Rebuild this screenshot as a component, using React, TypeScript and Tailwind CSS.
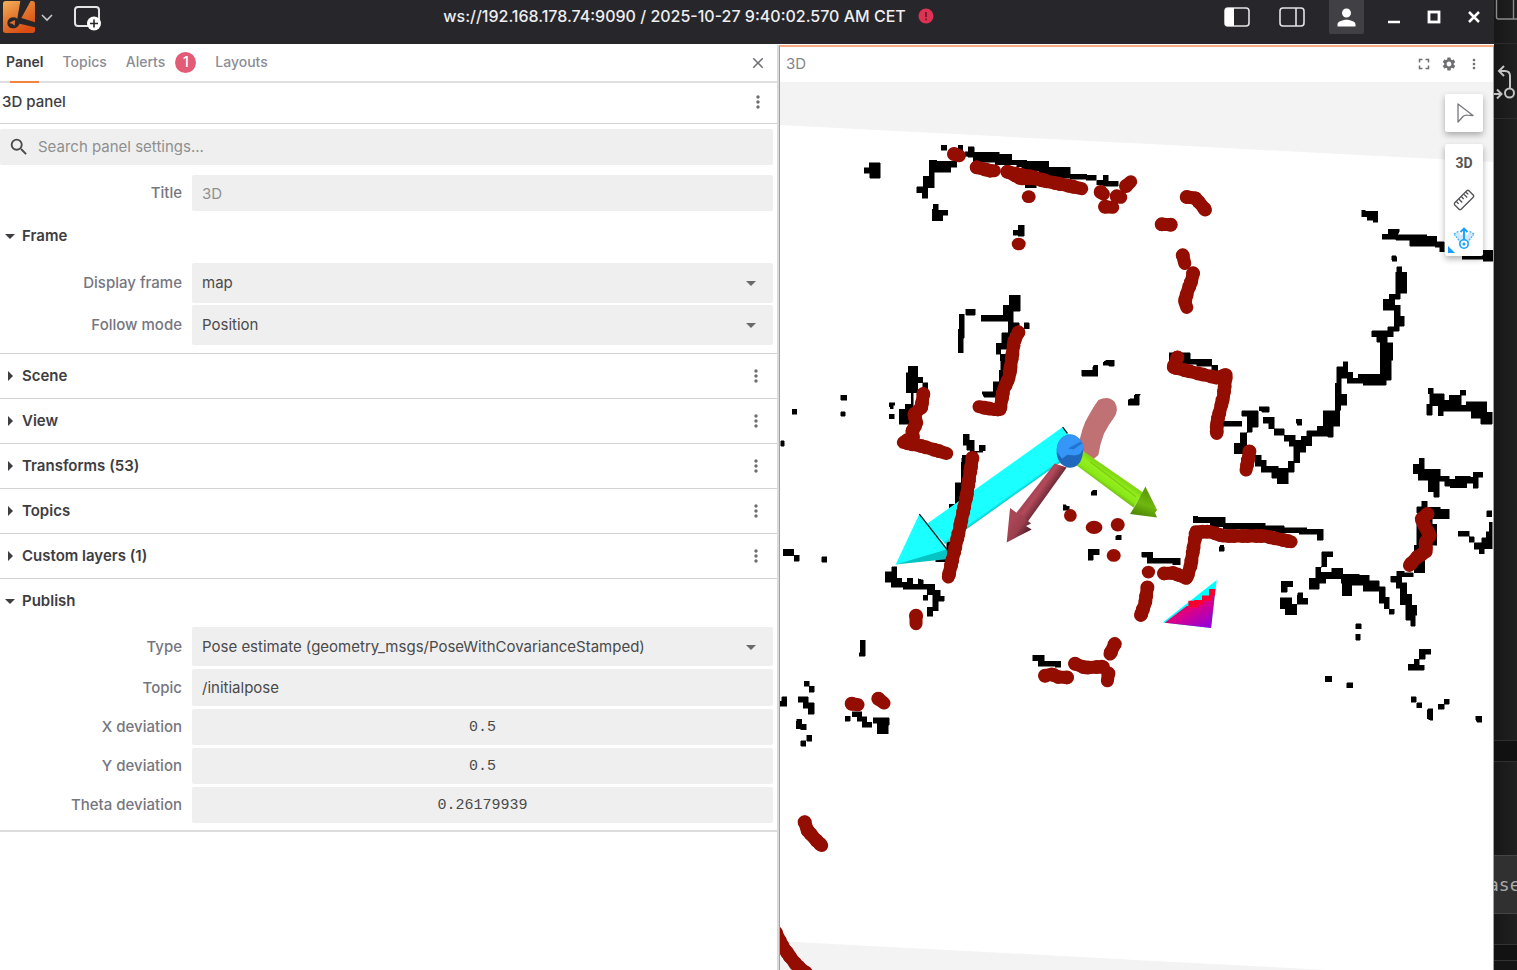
import { ReactNode } from "react";
import {
  MdArrowDropDown,
  MdArrowRight,
  MdClose,
  MdFullscreen,
  MdMoreVert,
  MdPerson,
  MdSearch,
  MdSettings,
} from "react-icons/md";

type Tile = { x: number; y: number; walls: string; scans: string; dots?: number[][] };

/* Occupancy grid walls and laser hits, in third-of-a-pixel units per tile. */
const tiles: Tile[] = [
  {
    x: 780,
    y: 120,
    walls:
      "M484 75h16v15h-16z M534 76h14v20h-14z M564 80h18v18h-18z M555 95H580V97H657V103H695V120H740V124H806V142H871V163H920V166H949V181H918V178H870V174H806V166H776V152H725V140H710V134H645V127H580V112H563V108H555Z M950 181H969V165H984V183H1014V198H968V194H950Z M448 121H470V124H530V142H512V157H463V203H443V235H426V218H410V200H430V169H448Z M268 128H301V174H269V160H253V143H268Z M459 252H474V270H503V286H488V302H456V268H459Z M715 316H733V348H715V346H699V331H715Z M736 190h33v13h-33z M688 525H721V574H700V608H717V640H690V670H680V688H662V702H648V670H665V638H684V604H603V586H669V556H688Z M733 608h15v18h-15z M557 567h29v18h-29z M538 582H552V654H549V698H534V628H538Z M661 702H690V790H670V832H612L606 818V815H640V785H658V750H662Z M700 740h10v14h-10z M384 739H413V772H428V788H413V818H400V912H358V868H375V852H394V818H379V758H384Z M428 788h15v18h-15z M36 867h14v15h-14z M182 826h18v14h-18z M182 875h14v14h-14z M328 848h16v8h-4v10h-10v-6h-2z M328 883h15v13h-15z M905 750H938V740L942 736H953V768H905Z M970 727L978 720H1003V739H986V735H970Z M1063 826L1067 822H1080V826H1077V855H1045V840L1050 836H1063Z",
    scans:
      "M522 102L538 107 M590 142L630 152L643 152 M682 155L725 176L755 174L800 184L850 194L905 206 M682 155L725 165L755 170L800 182 M962 216L970 222 M975 260L998 262 M1010 229L1022 232 M1038 198L1052 185 M715 637L702 665L696 710L687 772L670 810L660 868L640 868L597 860 M430 822L424 862L402 883L410 908L396 935L400 950L370 967L425 978L500 1000",
    dots: [[746, 230, 21, 19], [716, 372, 21, 19]],
  },
  {
    x: 1100,
    y: 150,
    walls:
      "M785 181H796V184H833V217H819V211H802V200H785Z M846 252H864V238H897V246L892 254H980V259H1010V275H1033V305H1019V291H1005V288H929V270H887V267H846Z M1086 310H1147V301H1180V333H1150V328H1086Z M875 317h13v5h2v12h-14z M890 350H905V367H920V430H901V448H884V466H900V499H913V529H897V543H879V560H862V578H878V630H873V690H858V706H789V700H741V685H724V732H740V765H722V780H719V828H700V862H683V858H635V887H617V907H599V938H582V967H565V1001H531V985H515V966H483V949H466V915H484V931H499V949H535V955H564V934H581V889H568V873H553V856H585V870H603V858H620V842H651V828H669V782H705V699H710V650H729V635H743V667H758V685H774V672H841V577H830V560H815V542H863V530H882V480H849V447H867V432H887V367H890Z M489 801H523V836H553V856H523V836H506V820H489Z M425 782H474V831H456V847H440V894H430V911H402V880H421V848H441V798H425Z M477 770H508V787H485V782H477Z M588 807h17v18h-13v-6h-4z M370 814h55v15h-55z M208 608H271V627H335V646H353V664H335V648H290V642H208Z M984 714H999V731H984Z M999 731H1032V750H1047V736H1083V765H1098V755H1160V787H1176V822H1142V804H1113V783H1029V797H1014V767H997V796H980V762H989V731Z M1081 720h16v15h-16z",
    scans:
      "M260 141L285 144L300 160L316 180 M185 223L212 224 M248 316L254 340 M279 370L275 390L262 425L254 455L260 472 M232 622L220 652L285 668L350 683L378 674L370 740L350 820L350 850 M448 904L442 940L438 960",
  },
  {
    x: 780,
    y: 380,
    walls:
      "M2 182h11v16h-11z M550 163H568V180H582V213H597V196H616V212H608V216H590V226H570V210H560V195H550Z M547 226H570V380H526V308H544V250Z M508 372h22v12h-22z M500 485H520V545H467V535L500 530Z M10 508H41V525H57V543H43V527H10Z M125 530h15v17h-15z M335 560H350V594H365V606H381V594H398V612H414V596L429 600V612H464V630H480V648H493V664H474V692H458V708H441V681H458V644H442V627H370V622H333V606H316V575H335Z M429 645h14v15h-14z",
    scans: "M408 707L408 731 M577 234L560 345L540 440L505 591",
  },
  {
    x: 1020,
    y: 380,
    walls:
      "M218 331h12v14h-16v-8z M129 374h10v4h8v12h-18z M291 465h13v14h-17v-10z M204 508H237V524H219V540H204Z M365 517H398V535H480V554H458V550H382V532H365Z M600 496h11v4h2v14h-16v-10z M519 409H533V412H615V430H735V437H792V443H860V447H909V480H892V462H838V458H765V452H680V448H610V440H570V428H519Z M784 603H818V620H802V637H784Z M833 638H848V655H863V672H831V660Z M781 653H815V672H830V704H796V686H781Z M38 826H73V844H122V862H105V859H55V842H38Z",
    scans:
      "M432 580L460 579L500 594L512 555L528 455L570 455L610 468L680 468L735 468L775 477L813 485 M382 622L375 670L362 706 M284 792L270 822 M75 887L95 882L115 891L142 892 M165 851L195 863L250 860 M265 880L262 902",
    dots: [[151, 406, 19, 19], [222, 442, 25, 20], [293, 434, 21, 20], [281, 526, 21, 19], [385, 576, 20, 19]],
  },
  {
    x: 1280,
    y: 370,
    walls:
      "M417 264H433V297H481V318H508V327H525V318H571V322H580V306H608V322H594V355H580V340H560V353H510V348H494V334H478V382H461V365H444V330H414V311H399V282H417Z M425 394H441V412H480V417H508V446H456V462H470V525H434V608H402V525H410V460H420V430H410V410H425Z M620 422h15v18h-15z M627 456H636V536H612V551H598V537H583V518H605V503H618V485H627Z M534 484H568V500H582V517H568V499H534Z M125 545H158V560H140V590H122V606H155V594H188V612H237V615H268V632H298V650H316V682H327V716H313V700H298V664H250V646H215V677H186V640H184V626H137V640H118V657H88V624H107V591H125Z M328 717h15v15h-15z M350 603H372V608H400V620H365V638H380V672H395V705H410V736H406V769H392V750H377V704H361V654H348V636H332V619H350Z M227 761h17v15h-17z M227 793h14v17h-14z M136 919h19v16h-19z M200 938h18v15h-18z M417 838H452V852H435V867H418V885H433V901H385V883H402V867H417Z M394 980h15v17h-15z M410 998h15v15h-15z M441 1020L446 1016H458V1050H450L441 1045Z M474 1002h18v15h-18z M492 987h16v15h-16z M587 1039h18v17h-13l-5 -5z",
    scans: "M442 432L424 445L435 472L450 495L436 515L438 545L410 562L388 586",
  },
  {
    x: 780,
    y: 620,
    walls:
      "M241 61H256V109H238V98H241Z M73 184h15v15h-15z M88 199h15v17h-15z M54 230H84V248H102V282H85V265H69V246H54Z M5 230H20V259H0V244H5Z M50 298H65V313H79V329H62V326H48Z M80 346h15v17h-15z M62 362h15v17h-15z M196 288h15v16h-15z M216 275H245V290H260V307H275V322H246V304H231V290H216Z M279 293H328V316H324V341H291V309H279Z",
    scans:
      "M215 251L234 254 M295 236L312 249 M74 606L82 630L108 660L125 676 M-12 938L6 975L30 1010L50 1035L80 1060",
  },
];

function Scene() {
  return (
    <svg
      className="block h-full w-full bg-white"
      viewBox="780 82 713 888"
      preserveAspectRatio="xMinYMin slice"
      role="img"
      aria-label="3D map"
    >
      <defs>
        <linearGradient id="cyanShaft" gradientUnits="userSpaceOnUse" x1="640" y1="290" x2="708" y2="386">
          <stop offset="0" stopColor="#1affff" />
          <stop offset="0.62" stopColor="#1affff" />
          <stop offset="0.68" stopColor="#06cfcf" />
          <stop offset="1" stopColor="#00b4b4" />
        </linearGradient>
        <linearGradient id="redShaft" gradientUnits="userSpaceOnUse" x1="760" y1="320" x2="800" y2="348">
          <stop offset="0" stopColor="#a04352" />
          <stop offset="0.45" stopColor="#b24a5a" />
          <stop offset="1" stopColor="#6d2a36" />
        </linearGradient>
        <linearGradient id="redHead" gradientUnits="userSpaceOnUse" x1="690" y1="430" x2="735" y2="462">
          <stop offset="0" stopColor="#a94656" />
          <stop offset="0.55" stopColor="#9b3f4e" />
          <stop offset="1" stopColor="#5c222d" />
        </linearGradient>
        <linearGradient id="greenShaft" gradientUnits="userSpaceOnUse" x1="1000" y1="282" x2="972" y2="322">
          <stop offset="0" stopColor="#82d914" />
          <stop offset="0.3" stopColor="#93ef1c" />
          <stop offset="0.7" stopColor="#8ae818" />
          <stop offset="1" stopColor="#6db70f" />
        </linearGradient>
        <linearGradient id="greenHead" gradientUnits="userSpaceOnUse" x1="1105" y1="340" x2="1080" y2="405">
          <stop offset="0" stopColor="#5f9f0c" />
          <stop offset="0.5" stopColor="#6fb80f" />
          <stop offset="1" stopColor="#528b08" />
        </linearGradient>
        <linearGradient id="frustum" gradientUnits="userSpaceOnUse" x1="500" y1="665" x2="545" y2="745">
          <stop offset="0" stopColor="#f2004f" />
          <stop offset="0.35" stopColor="#d8008c" />
          <stop offset="1" stopColor="#9a00d4" />
        </linearGradient>
      </defs>
      <path d="M780 82H1493V162L1150 144L780 125Z M780 941L1140 960L1330 970H780Z" fill="#f3f3f3" />
      {tiles.map((t, i) => (
        <path
          key={i}
          d={t.walls}
          transform={`translate(${t.x} ${t.y}) scale(0.33333)`}
          fill="#000"
          stroke="#000"
          strokeWidth="1.5"
          shapeRendering="crispEdges"
        />
      ))}
      <g transform="translate(780 380) scale(0.33333)">
        <path
          d="M955 60Q985 45 1004 66Q1018 90 1002 112Q985 135 972 160Q960 190 955 225L925 250L895 200Q905 140 925 108Q940 80 955 60Z"
          fill="#c07173"
        />
        <path d="M848 141L872 170L862 232L556 450L495 492L440 432Z" fill="url(#cyanShaft)" />
        <path d="M848 141L862 160" stroke="#111" strokeWidth="4" />
        <path d="M418 402L347 553L510 518Z" fill="#1affff" />
        <path d="M347 553L500 508L512 536Z" fill="#06c4c4" />
        <path d="M418 402L504 512" stroke="#062222" strokeWidth="4" />
        <path d="M824 250L860 262L738 432L706 402Z" fill="url(#redShaft)" />
        <path d="M690 384L680 487L755 448L738 438L753 430L738 418L728 405L715 402Z" fill="url(#redHead)" />
        <path d="M908 212L1090 338L1060 382L890 256Z" fill="url(#greenShaft)" />
        <path d="M930 245L1068 350" stroke="#79cb12" strokeWidth="3" />
        <path d="M1096 319L1131 390L1125 398L1131 412L1050 402L1075 360Z" fill="url(#greenHead)" />
        <path d="M830 212C830 182 850 163 870 163S910 182 910 205L908 222C905 248 890 263 870 263S832 245 830 222Z" fill="#1f68bd" />
        <path d="M830 214C830 182 850 163 870 163S910 182 910 205L900 222L885 226L862 224L846 236Z" fill="#3596f7" />
        <path d="M864 205L902 184L906 190L880 208Z" fill="#1f74d4" />
      </g>
      <g transform="translate(1020 380) scale(0.33333)">
        <path d="M590 600L573 744L428 727Z" fill="#00ffff" />
        <path d="M586 627L573 744L434 728L500 678H522V664H546V648H568V627Z" fill="url(#frustum)" />
        <path d="M568 627H585V646H576V662H550V674H535V682H505V662H522V660H546V646H568Z" fill="#fa0030" />
      </g>
      {tiles.map((t, i) => (
        <g
          key={i}
          transform={`translate(${t.x} ${t.y}) scale(0.33333)`}
          fill="none"
          stroke="#930d00"
          strokeLinecap="round"
          strokeLinejoin="round"
        >
          <path d={t.scans} strokeWidth="39" />
          <path d={t.scans} strokeWidth="42" strokeDasharray="0 27 0 14" />
          {t.dots?.map(([cx, cy, rx, ry]) => (
            <ellipse key={`${cx}-${cy}`} cx={cx} cy={cy} rx={rx} ry={ry} fill="#930d00" stroke="none" />
          ))}
        </g>
      ))}
    </svg>
  );
}

function Logo() {
  return (
    <svg className="size-8" viewBox="0 0 96 96" aria-hidden="true">
      <defs>
        <linearGradient id="logoFill" x1="0" y1="0" x2="0.6" y2="1">
          <stop offset="0" stopColor="#f2b15c" />
          <stop offset="0.5" stopColor="#e57a30" />
          <stop offset="1" stopColor="#d94c12" />
        </linearGradient>
      </defs>
      <rect width="96" height="96" rx="8" fill="url(#logoFill)" />
      <path d="M52 0H83L55 51L96 64V79L50 68Q44 82 28 82A16 16 0 0 1 13 66Q14 51 30 49Q38 49 43 53Z" fill="#27272b" />
      <path d="M18 66L36 57L35 74L28 68Z" fill="#e8702a" />
    </svg>
  );
}

function IconButton({ label, className, children }: { label: string; className?: string; children: ReactNode }) {
  return (
    <button type="button" aria-label={label} className={`flex items-center justify-center ${className ?? ""}`}>
      {children}
    </button>
  );
}

function TitleBar() {
  return (
    <header className="flex h-11 shrink-0 items-start bg-[#27272b] text-white">
      <div className="flex h-[34px] w-[168px] items-center pl-[3px]">
        <IconButton label="Main menu" className="h-8 gap-0.5">
          <Logo />
          <svg className="size-5" viewBox="0 0 20 20" fill="none" stroke="#c8c8cc" strokeWidth="1.6" aria-hidden="true">
            <path d="M5 8l5 5 5-5" />
          </svg>
        </IconButton>
        <IconButton label="Add panel" className="ml-3 h-8 w-9">
          <svg className="h-8 w-8" viewBox="0 0 32 32" fill="none" aria-hidden="true">
            <rect x="4" y="6" width="24" height="19" rx="3" stroke="#e4e4e6" strokeWidth="2" />
            <circle cx="23" cy="22.500" r="7" fill="#fff" />
            <path d="M23 18.500v8M19 22.500h8" stroke="#27272b" strokeWidth="1.600" />
          </svg>
        </IconButton>
      </div>
      <div className="flex h-8 flex-1 items-center justify-center gap-3 font-medium text-[#eeeef0]">
        <span className="text-base">ws://192.168.178.74:9090 / 2025-10-27 9:40:02.570 AM CET</span>
        <svg className="size-4" viewBox="0 0 16 16" aria-hidden="true">
          <circle cx="8" cy="8" r="7.500" fill="#de3252" />
          <path d="M8 4v5M8 10.500v1.800" stroke="#6b1a2b" strokeWidth="1.800" />
        </svg>
      </div>
      <div className="flex h-[34px] items-center">
        <IconButton label="Toggle left sidebar" className="w-[55px]">
          <svg className="h-5 w-[26px]" viewBox="0 0 26 20" fill="none" aria-hidden="true">
            <rect x="1" y="1" width="24" height="18" rx="3" stroke="#e4e4e6" strokeWidth="1.600" />
            <path d="M4 1H10V19H4A3 3 0 0 1 1 16V4A3 3 0 0 1 4 1Z" fill="#fff" />
          </svg>
        </IconButton>
        <IconButton label="Toggle right sidebar" className="w-[55px]">
          <svg className="h-5 w-[26px]" viewBox="0 0 26 20" fill="none" stroke="#e4e4e6" strokeWidth="1.600" aria-hidden="true">
            <rect x="1" y="1" width="24" height="18" rx="3" />
            <path d="M17 1V19" />
          </svg>
        </IconButton>
        <IconButton label="Account" className="ml-2.5 h-[34px] w-[35px] rounded-b-xs bg-[#404045]">
          <MdPerson className="size-[27px]" />
        </IconButton>
        <IconButton label="Minimize" className="ml-2.5 w-10">
          <svg className="size-4" viewBox="0 0 16 16" stroke="#fff" strokeWidth="2.500" aria-hidden="true">
            <path d="M2 13H14" />
          </svg>
        </IconButton>
        <IconButton label="Maximize" className="w-10">
          <svg className="size-4" viewBox="0 0 16 16" fill="none" stroke="#fff" strokeWidth="2.800" aria-hidden="true">
            <rect x="3" y="3" width="10" height="10" />
          </svg>
        </IconButton>
        <IconButton label="Close window" className="w-10">
          <svg className="size-4" viewBox="0 0 16 16" stroke="#fff" strokeWidth="2.500" aria-hidden="true">
            <path d="M3 3L13 13M13 3L3 13" />
          </svg>
        </IconButton>
      </div>
    </header>
  );
}

function Field({ id, label, children }: { id: string; label: string; children: ReactNode }) {
  return (
    <div className="flex items-center">
      <label htmlFor={id} className="w-[192px] shrink-0 pr-2.5 text-right font-medium text-[#76767f]">
        {label}
      </label>
      <div className="relative mr-1 min-w-0 flex-1">{children}</div>
    </div>
  );
}

const box = "block w-full rounded-xs bg-[#efefef] px-2.5 text-[#4a4a4a] outline-none";

function SelectField({ id, label, value, tall }: { id: string; label: string; value: string; tall?: boolean }) {
  return (
    <Field id={id} label={label}>
      <select id={id} className={`${box} appearance-none ${tall ? "h-10" : "h-[39px]"}`}>
        <option>{value}</option>
      </select>
      <MdArrowDropDown className="pointer-events-none absolute inset-y-0 right-2.5 my-auto size-6 text-[#6a6a6a]" />
    </Field>
  );
}

function NumberField({ id, label, value }: { id: string; label: string; value: string }) {
  return (
    <Field id={id} label={label}>
      <input
        id={id}
        defaultValue={value}
        className={`${box} h-9 text-center font-['Liberation_Mono',monospace]`}
      />
    </Field>
  );
}

function SectionHeading({ title, open }: { title: string; open?: boolean }) {
  return (
    <div className="flex h-11 items-center justify-between pr-3 pb-px">
      <button type="button" aria-expanded={!!open} className="flex items-center font-semibold text-[#3d3d42]">
        {open ? (
          <MdArrowDropDown className="-ml-0.5 size-6" />
        ) : (
          <MdArrowRight className="-ml-0.5 size-6" />
        )}
        {title}
      </button>
      {!open && (
        <IconButton label={`${title} actions`} className="w-[18px]">
          <MdMoreVert className="size-5 shrink-0 text-[#6e6e73]" />
        </IconButton>
      )}
    </div>
  );
}

function Sidebar() {
  const tab = "flex h-full items-center pb-0.5 font-medium";
  return (
    <aside className="flex w-[52%] shrink-0 flex-col bg-white">
      <div className="flex h-[38px] shrink-0 items-center justify-between border-b-2 border-[#dfdfe0] pr-2.5 text-sm text-[#8c8c94]">
        <div role="tablist" className="flex h-full gap-[19px] pl-1.5">
          <button type="button" role="tab" aria-selected="true" className={`${tab} relative font-semibold text-[#3d3d42]`}>
            Panel
            <span className="absolute inset-x-1 -bottom-0.5 h-0.5 bg-[#f28340]" />
          </button>
          <button type="button" role="tab" className={tab}>Topics</button>
          <button type="button" role="tab" className={`${tab} gap-2.5`}>
            Alerts
            <span className="flex size-[21px] items-center justify-center rounded-full bg-[#e25c76] text-white">1</span>
          </button>
          <button type="button" role="tab" className={tab}>Layouts</button>
        </div>
        <IconButton label="Close sidebar" className="w-[18px]">
          <MdClose className="size-[18px] text-[#6e6e73]" />
        </IconButton>
      </div>
      <div className="flex h-[41px] shrink-0 items-center justify-between border-b border-[#d2d4d6] pr-2.5 pb-0.5 pl-0.5">
        <h2 className="font-medium text-[#3d3d42]">3D panel</h2>
        <IconButton label="Panel actions" className="w-[18px]">
          <MdMoreVert className="size-5 shrink-0 text-[#6e6e73]" />
        </IconButton>
      </div>
      <div className="mt-[5px] mr-1 flex h-9 shrink-0 items-center gap-2 rounded-xs bg-[#efefef] pl-2">
        <MdSearch className="size-[22px] text-[#4a4a4a]" />
        <input
          aria-label="Search panel settings"
          placeholder="Search panel settings..."
          className="min-w-0 flex-1 bg-transparent outline-none placeholder:text-[#8f8f8f]"
        />
      </div>
      <div className="mt-2.5">
        <Field id="title" label="Title">
          <input id="title" placeholder="3D" className={`${box} h-9 placeholder:text-[#8f8f8f]`} />
        </Field>
      </div>
      <section className="border-b border-[#d2d4d6] pb-2">
        <div className="pt-[3px] pb-[5px]">
          <SectionHeading title="Frame" open />
        </div>
        <div className="flex flex-col gap-0.5">
          <SelectField id="display-frame" label="Display frame" value="map" tall />
          <SelectField id="follow-mode" label="Follow mode" value="Position" tall />
        </div>
      </section>
      {["Scene", "View", "Transforms (53)", "Topics", "Custom layers (1)"].map((title) => (
        <section key={title} className="border-b border-[#d2d4d6]">
          <SectionHeading title={title} />
        </section>
      ))}
      <section className="border-b-2 border-[#dcdcdd] pb-[7px]">
        <div className="pb-1">
          <SectionHeading title="Publish" open />
        </div>
        <div className="flex flex-col gap-[3px]">
          <SelectField
            id="publish-type"
            label="Type"
            value="Pose estimate (geometry_msgs/PoseWithCovarianceStamped)"
          />
          <Field id="publish-topic" label="Topic">
            <input id="publish-topic" defaultValue="/initialpose" className={`${box} h-[37px]`} />
          </Field>
          <NumberField id="x-deviation" label="X deviation" value="0.5" />
          <NumberField id="y-deviation" label="Y deviation" value="0.5" />
          <NumberField id="theta-deviation" label="Theta deviation" value="0.26179939" />
        </div>
      </section>
    </aside>
  );
}

function ViewTools() {
  const card = "bg-white shadow-[0_3px_6px_rgba(0,0,0,0.3)] rounded-xs";
  return (
    <div className="absolute top-3 right-2.5 flex w-[38px] flex-col gap-3">
      <IconButton label="Select object" className={`${card} h-[38px]`}>
        <svg className="size-5" viewBox="0 0 20 20" fill="none" stroke="#77777c" strokeWidth="1.300" strokeLinejoin="round" aria-hidden="true">
          <path d="M4 1V19L9 13.500Q10.500 12 13 12.200L19 12.500Z" />
        </svg>
      </IconButton>
      <div className={`${card} relative flex flex-col`}>
        <button type="button" className="h-[37px] font-['Roboto',sans-serif] text-sm font-bold text-[#555]">3D</button>
        <IconButton label="Measure" className="h-[38px]">
          <svg className="size-[22px]" viewBox="0 0 22 22" fill="none" stroke="#505055" strokeWidth="1.300" aria-hidden="true">
            <g transform="rotate(-45 11 11)">
              <rect x="1" y="6.500" width="20" height="9" rx="1.500" />
              <path d="M4.500 7V10M8 7V11.500M11.500 7V10M15 7V11.500M18 7V10" />
            </g>
          </svg>
        </IconButton>
        <IconButton label="Publish pose estimate" className="h-[37px]">
          <svg className="size-6" viewBox="0 0 24 24" fill="none" aria-hidden="true">
            <path d="M2 8L7 6L9 10L12 5L15 10L17 6L22 8L15 17H9Z" fill="#cfe8fc" />
            <path d="M2 8L9 17M22 8L15 17M2 8L7 5M22 8L17 5" stroke="#4bb0f8" strokeWidth="1.300" strokeDasharray="2 1" />
            <path d="M12 14V3M8.500 6L12 2.500L15.500 6" stroke="#189ffb" strokeWidth="1.800" />
            <circle cx="12" cy="18" r="4.200" fill="#fff" stroke="#189ffb" strokeWidth="1.600" />
            <circle cx="12" cy="18" r="1.600" fill="#189ffb" />
          </svg>
        </IconButton>
        <svg className="absolute bottom-0.5 left-0.5 size-2" viewBox="0 0 8 8" aria-hidden="true">
          <path d="M1 0V7H8Z" fill="#189ffb" />
        </svg>
      </div>
    </div>
  );
}

function ScenePanel() {
  return (
    <main className="ml-0.5 flex min-w-0 flex-1 flex-col border-x border-t-2 border-x-[#f08a45] border-t-[#f5ad80] bg-white">
      <div className="flex h-[35px] shrink-0 items-center justify-between pr-[7px] pb-0.5 pl-1.5 text-[#85858c]">
        <h1 className="text-[15px]">3D</h1>
        <div className="flex items-center text-[#6e6e73]">
          <IconButton label="Fullscreen" className="w-[25px]">
            <MdFullscreen className="size-[18px]" />
          </IconButton>
          <IconButton label="Settings" className="w-[25px]">
            <MdSettings className="size-4" />
          </IconButton>
          <IconButton label="More" className="w-[25px]">
            <MdMoreVert className="size-4" />
          </IconButton>
        </div>
      </div>
      <div className="relative min-h-0 flex-1">
        <Scene />
        <ViewTools />
      </div>
    </main>
  );
}

function EditorEdge() {
  return (
    <div className="flex w-[23px] shrink-0 flex-col overflow-hidden bg-linear-to-r from-[#171717] to-[#202020]">
      <div className="h-[43px]">
        <svg className="block h-6 w-[23px]" viewBox="0 0 23 24" fill="none" stroke="#8a8a8a" strokeWidth="1.400" aria-hidden="true">
          <path d="M2.500 0V17A2 2 0 0 0 4.500 19H23M19.500 0V19" />
        </svg>
      </div>
      <div className="flex h-[76px] items-center border-y border-[#2b2b2b]">
        <svg className="h-10 w-[23px]" viewBox="0 0 23 40" fill="none" stroke="#c3c3c3" strokeWidth="2" aria-hidden="true">
          <path d="M10 5L5 10L10 15M5 10H11Q16 10 16 15V27M0 33H7M3 28.500L7.500 33L3 37.500" />
          <circle cx="15.500" cy="32" r="4.500" />
        </svg>
      </div>
      <div className="h-[621px]" />
      <div className="h-[22px] border-y border-[#2e2e2e] bg-[#111]" />
      <div className="h-[93px]" />
      <div className="flex h-[59px] items-center border-y border-[#444] bg-[#303030] font-['DejaVu_Sans_Mono',monospace] text-lg text-[#aaa]">
        <span className="-ml-1.5">ase</span>
      </div>
      <div className="h-[30px]" />
      <div className="h-[17px] border-y border-[#333] bg-[#121212]" />
      <div className="flex-1 bg-[#141414]" />
    </div>
  );
}

export default function App() {
  return (
    <div className="flex h-screen overflow-hidden font-['Inter',sans-serif] text-[15px] leading-5">
      <div className="flex min-w-0 flex-1 flex-col">
        <TitleBar />
        <div className="flex min-h-0 flex-1 border-t border-white bg-[#d9dadb]">
          <Sidebar />
          <ScenePanel />
        </div>
      </div>
      <EditorEdge />
    </div>
  );
}
